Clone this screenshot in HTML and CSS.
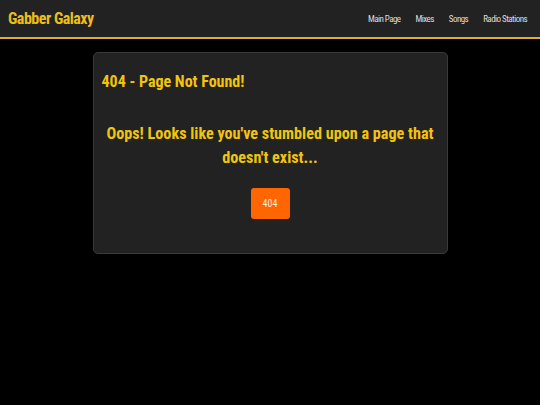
FILE: index.html
```html
<!DOCTYPE html>
<html>
<head>
<meta charset="utf-8">
<link rel="stylesheet" href="styles.css">
</head>
<body>
<header class="site-header">
  <div class="brand">Gabber Galaxy</div>
  <nav class="nav">
    <a href="#">Main Page</a>
    <a href="#">Mixes</a>
    <a href="#">Songs</a>
    <a href="#">Radio Stations</a>
  </nav>
</header>
<main class="main">
  <section class="card">
    <h1 class="card-title">404 - Page Not Found!</h1>
    <p class="card-text">Oops! Looks like you've stumbled upon a page that doesn't exist...</p>
    <div class="actions"><a class="btn" href="#">404</a></div>
  </section>
</main>
</body>
</html>
```
FILE: styles.css
```css
html, body {
  margin: 0;
  padding: 0;
  background: #000;
  font-family: Roboto, "Liberation Sans", sans-serif;
  font-stretch: condensed;
}
.site-header {
  display: flex;
  align-items: center;
  justify-content: space-between;
  height: 37px;
  padding: 0 13px 0 8px;
  background: #222;
  border-bottom: 2px solid #e0b020;
}
.brand {
  color: #ecbd1c;
  font-weight: bold;
  font-size: 16px;
  letter-spacing: -0.5px;
}
.nav {
  display: flex;
  gap: 15px;
}
.nav a {
  color: #ddd;
  text-decoration: none;
  font-size: 9px;
  letter-spacing: -0.55px;
}
.main {
  padding-top: 13px;
}
.card {
  box-sizing: border-box;
  width: 355px;
  margin: 0 auto;
  height: 202px;
  background: #222;
  border: 1px solid #3a3a3a;
  border-radius: 5px;
  padding: 19px 8px;
}
.card-title {
  margin: 0;
  color: #f1c40f;
  font-size: 16px;
  font-weight: bold;
  line-height: 20px;
}
.card-text {
  margin: 30px 0 0;
  color: #f1c40f;
  font-size: 16.2px;
  font-weight: bold;
  text-align: center;
  line-height: 24px;
}
.actions {
  display: flex;
  justify-content: center;
  margin-top: 18px;
}
.btn {
  display: flex;
  align-items: center;
  justify-content: center;
  width: 39px;
  height: 31px;
  background: #ff6600;
  color: #ffe8d8;
  font-size: 10px;
  border-radius: 3px;
  text-decoration: none;
}
```
